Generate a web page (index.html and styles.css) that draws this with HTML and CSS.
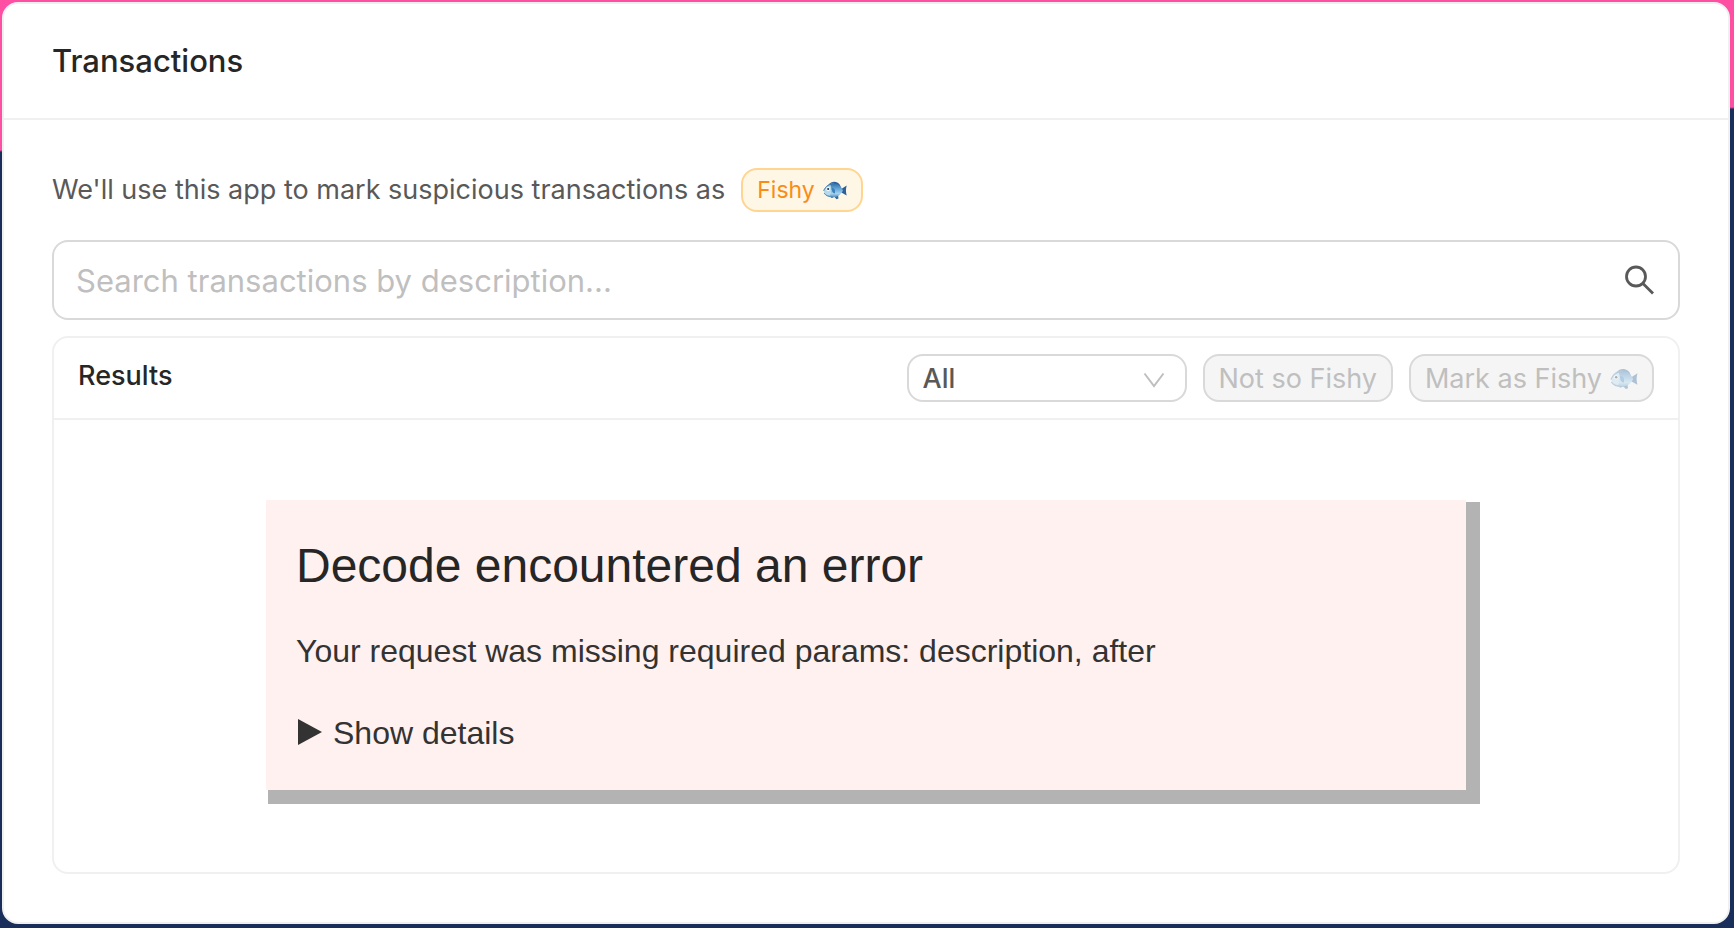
FILE: index.html
```html
<!DOCTYPE html>
<html lang="en">
<head>
<meta charset="utf-8">
<title>Transactions</title>
<link rel="stylesheet" href="styles.css">
</head>
<body>
<svg width="0" height="0" class="defs" aria-hidden="true">
  <defs>
    <linearGradient id="fish-body" x1="0" y1="0" x2="0" y2="1">
      <stop offset="0" stop-color="#2f6ba8"/>
      <stop offset="0.35" stop-color="#5c9fd2"/>
      <stop offset="0.75" stop-color="#a3d2ee"/>
      <stop offset="1" stop-color="#5f93bd"/>
    </linearGradient>
    <symbol id="fish" viewBox="0 0 24 20">
      <path d="M6 4.500C8 1 14 .4 17 5l1 3-11-1z" fill="#2b5f99"/>
      <path d="M7 15l1.500 3 3-1 2 2.200 2-.7-.5-3.500z" fill="#37699c"/>
      <path d="M17.500 9.500l6.200-4c-1 3.500-1 6.500 0 10l-6.200-3.500z" fill="#2d5f99"/>
      <path d="M.6 10.800C2.500 6.200 6.500 3.200 11 3.200c4 0 7 3 9 7.200-2.300 4.300-5.500 6.600-10 6.600-4.200 0-7.500-1.500-9-4l1-1z" fill="url(#fish-body)"/>
      <path d="M1.200 10.700C2.500 7.800 4.800 5.800 7.400 5c1.500 3 1.400 7.500-.6 10.600-2.300-.4-4.300-1.300-5.300-2.700l1-1z" fill="#b4daee"/>
      <path d="M8.500 7.500c3 .5 4 2.300 3.300 6-2-.3-3.300-2.500-3.300-6z" fill="#3d80bb"/>
      <path d="M.6 10.800C2.500 6.200 6.500 3.200 11 3.200M1 13c1.500 2.500 4.800 4 9 4" fill="none" stroke="#4e83b3" stroke-width=".9"/>
      <circle cx="5.200" cy="9" r="1.900" fill="#fff"/>
      <circle cx="5.200" cy="9" r="1.100" fill="#1d2c42"/>
    </symbol>
  </defs>
</svg>
<main class="card">
  <header class="card-head"><h1 class="card-title">Transactions</h1></header>
  <div class="card-body">
    <p class="intro">We'll use this app to mark suspicious transactions as
      <span class="tag">Fishy <svg class="tag-fish" role="img" aria-label="fish"><use href="#fish"/></svg></span>
    </p>
    <form class="search">
      <input class="search-input" type="text" placeholder="Search transactions by description..." aria-label="Search transactions by description">
      <button class="search-button" type="button" aria-label="Search">
        <svg class="search-icon" viewBox="0 0 30 30" fill="none" stroke="#595959" stroke-width="2.800"><circle cx="12" cy="11.500" r="9.500"/><path d="M18.700 18.200L29 28.500"/></svg>
      </button>
    </form>
    <section class="results">
      <header class="results-head">
        <h2 class="results-title">Results</h2>
        <div class="actions">
          <div class="select-wrap">
            <select class="select" aria-label="Filter"><option>All</option></select>
            <svg class="chevron" viewBox="0 0 22 16" fill="none" stroke="#bfbfbf" stroke-width="2"><path d="M1.500 1.500L11 14 20.500 1.500"/></svg>
          </div>
          <button class="button" type="button" disabled>Not so Fishy</button>
          <button class="button" type="button" disabled>Mark as Fishy <svg class="button-fish" role="img" aria-label="fish"><use href="#fish"/></svg></button>
        </div>
      </header>
      <div class="results-body">
        <div class="error">
          <h3 class="error-title">Decode encountered an error</h3>
          <p class="error-text">Your request was missing required params: description, after</p>
          <details class="details">
            <summary class="summary"><svg class="triangle" viewBox="0 0 26 28"><path d="M2 0L26 13 2 26z" fill="#333"/></svg>Show details</summary>
          </details>
        </div>
      </div>
    </section>
  </div>
</main>
</body>
</html>
```
FILE: styles.css
```css
* { box-sizing: border-box; }

body {
  display: flex;
  min-height: 100vh;
  margin: 0;
  padding: 2px 4px 4px 2px;
  background: linear-gradient(178.580deg, #ff4fa3 0 150px, #192e5b 152px);
  color: #595959;
  font-family: Inter, "Noto Sans", sans-serif;
  font-size: 27px;
}

h1, h2, h3, p { margin: 0; }

.defs { position: absolute; }

.card {
  display: flex;
  flex: 1;
  flex-direction: column;
  border: 2px solid #f0f0f0;
  border-radius: 16px;
  background: #fff;
}

.card-head {
  padding: 32px 48px;
  border-bottom: 2px solid #f0f0f0;
}

.card-title {
  color: #262626;
  font-size: 31px;
  font-weight: 500;
  line-height: 50px;
}

.card-body {
  display: flex;
  flex: 1;
  flex-direction: column;
  gap: 16px;
  padding: 48px;
}

.intro {
  display: flex;
  align-items: center;
  gap: 16px;
  margin-bottom: 12px;
  line-height: 40px;
}

.tag {
  display: flex;
  align-items: center;
  gap: 8px;
  padding: 0 14px;
  border: 2px solid #ffd591;
  border-radius: 16px;
  background: #fff7e6;
  color: #fa8c16;
  font-size: 23px;
}

.tag-fish { width: 24px; height: 20px; }

.search {
  display: flex;
  border: 2px solid #d9d9d9;
  border-radius: 16px;
}

.search-input {
  flex: 1;
  min-width: 0;
  height: 76px;
  padding: 0 22px;
  border: 0;
  border-radius: 16px;
  background: none;
  color: #595959;
  font: inherit;
  font-size: 31px;
}

.search-input::placeholder { color: #bfbfbf; }

.search-button {
  display: flex;
  align-items: center;
  padding: 0 24px;
  border: 0;
  background: none;
}

.search-icon { width: 30px; height: 30px; }

.results {
  display: flex;
  flex: 1;
  flex-direction: column;
  border: 2px solid #f0f0f0;
  border-radius: 16px;
}

.results-head {
  display: flex;
  align-items: flex-start;
  justify-content: space-between;
  padding: 16px 24px;
  border-bottom: 2px solid #f0f0f0;
}

.results-title {
  color: #262626;
  font-size: 27px;
  font-weight: 500;
  line-height: 44px;
}

.actions {
  display: flex;
  gap: 16px;
}

.select-wrap {
  position: relative;
  width: 280px;
}

.select {
  width: 100%;
  height: 48px;
  padding: 0 14px;
  border: 2px solid #d9d9d9;
  border-radius: 16px;
  background: #fff;
  color: #595959;
  font: inherit;
  font-weight: 500;
  appearance: none;
}

.chevron {
  position: absolute;
  top: 18px;
  right: 22px;
  width: 22px;
  height: 16px;
  pointer-events: none;
}

.button {
  display: flex;
  align-items: center;
  gap: 8px;
  height: 48px;
  padding: 0 14px;
  border: 2px solid #d9d9d9;
  border-radius: 16px;
  background: #f5f5f5;
  color: #bfbfbf;
  font: inherit;
}

.button-fish { width: 28px; height: 23px; opacity: 0.35; }

.results-body { padding: 80px 48px; }

.error {
  max-width: 1200px;
  margin: 0 auto;
  padding: 30px 30px 32px;
  background: #fff1f0;
  box-shadow: 8px 8px 0 6px #b3b3b3;
  color: #333;
  font-family: "Liberation Sans", Arial, sans-serif;
  font-size: 32px;
  line-height: 50px;
}

.error-title {
  margin-bottom: 24px;
  color: #262626;
  font-size: 48px;
  font-weight: 400;
  line-height: 72px;
}

.error-text { margin-bottom: 32px; }

.summary {
  display: flex;
  align-items: center;
  gap: 11px;
  list-style: none;
}

.triangle { width: 26px; height: 28px; }
```
